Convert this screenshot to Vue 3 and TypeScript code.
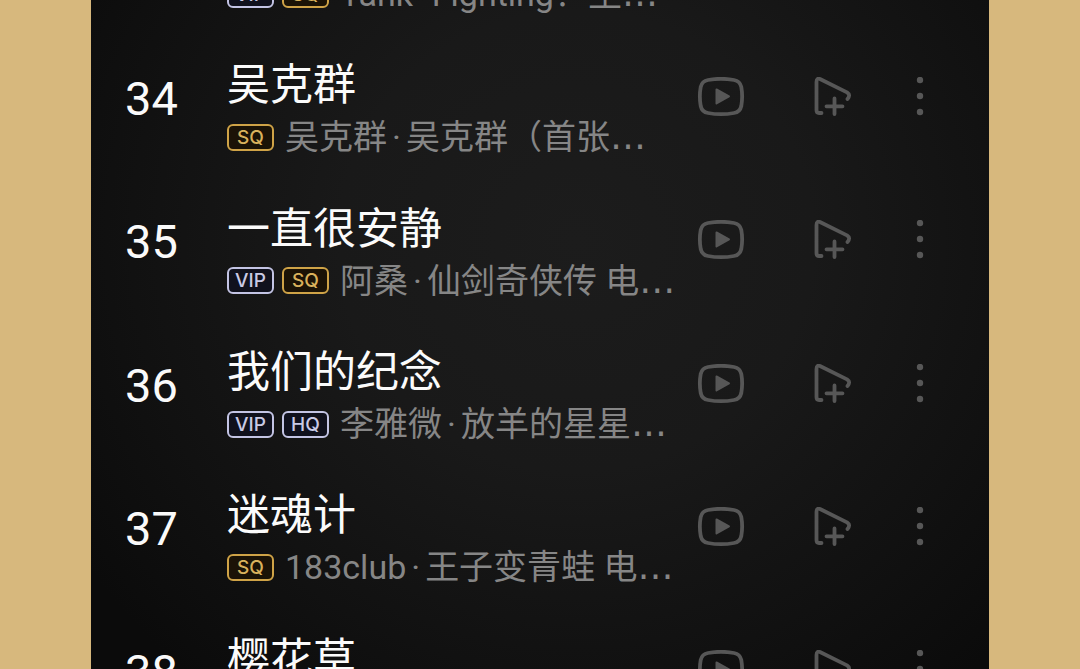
<script setup lang="ts">
interface Song {
  rank: number
  title: string
  badges: string[]
  artist: string
  album: string
}

const songs: Song[] = [
  { rank: 33, title: '三国恋', badges: ['VIP', 'SQ'], artist: 'Tank', album: 'Fighting！生' },
  { rank: 34, title: '吴克群', badges: ['SQ'], artist: '吴克群', album: '吴克群（首张' },
  { rank: 35, title: '一直很安静', badges: ['VIP', 'SQ'], artist: '阿桑', album: '仙剑奇侠传 电' },
  { rank: 36, title: '我们的纪念', badges: ['VIP', 'HQ'], artist: '李雅微', album: '放羊的星星' },
  { rank: 37, title: '迷魂计', badges: ['SQ'], artist: '183club', album: '王子变青蛙 电' },
  { rank: 38, title: '樱花草', badges: ['VIP', 'SQ'], artist: 'Sweety', album: '花言乔语' },
]
</script>

<template>
  <main class="page">
    <section class="panel">
      <ol class="songs">
        <li v-for="song in songs" :key="song.rank" class="song">
          <span class="rank">{{ song.rank }}</span>
          <div class="info">
            <h2 class="title">{{ song.title }}</h2>
            <div class="meta">
              <span
                v-for="badge in song.badges"
                :key="badge"
                class="badge"
                :class="{ gold: badge === 'SQ' }"
              >{{ badge }}</span>
              <p class="credit">{{ song.artist }}<span class="dot">·</span>{{ song.album }}<span class="more-text">…</span></p>
            </div>
          </div>
          <div class="actions">
            <button type="button" class="video" aria-label="播放视频">
              <svg width="48" height="40" viewBox="0 0 48 40" aria-hidden="true">
                <path
                  d="M11 3Q24 0.600 37 3Q43 4 44.300 10Q46 19.500 44.300 29Q43 35 37 36Q24 38.400 11 36Q5 35 3.700 29Q2 19.500 3.700 10Q5 4 11 3Z"
                  class="line"
                />
                <path d="M19.500 12.500L32 19.300L19.500 26.500Z" class="solid" />
              </svg>
            </button>
            <button type="button" class="add" aria-label="添加到播放列表">
              <svg width="40" height="40" viewBox="0 0 40 40" aria-hidden="true">
                <path
                  d="M9.500 36H7Q4.500 36 4.500 33V5Q4.500 0.400 8.500 2.200L35 15.400Q39 18 35.500 22"
                  class="line"
                />
                <path d="M14.500 29.300H30.500M22.500 21.500V37" class="line" />
              </svg>
            </button>
            <button type="button" class="menu" aria-label="更多">
              <svg width="24" height="40" viewBox="0 0 24 40" aria-hidden="true">
                <circle cx="12" cy="3" r="3.200" class="solid-dot" />
                <circle cx="12" cy="19" r="3.200" class="solid-dot" />
                <circle cx="12" cy="35" r="3.200" class="solid-dot" />
              </svg>
            </button>
          </div>
        </li>
      </ol>
    </section>
  </main>
</template>

<style>
body {
  margin: 0;
  background: #d7b87d;
}
</style>

<style scoped>
.page {
  box-sizing: border-box;
  height: 100vh;
  padding: 0 91px;
  overflow: hidden;
  background: #d7b87d;
  font-family: Roboto, "Noto Sans CJK SC", sans-serif;
}

.panel {
  height: 100%;
  overflow: hidden;
  background: radial-gradient(ellipse 66% 86% at 54% 36%, #1c1c1c 0%, #191919 40%, #111111 75%, #0b0b0b 100%);
}

/* The list is scrolled part of the way through its first row. */
.songs {
  display: grid;
  grid-auto-rows: 1fr;
  height: 860px;
  margin: -118px 0 0;
  padding: 0;
  list-style: none;
}

.song {
  display: flex;
  align-items: center;
  box-sizing: border-box;
  padding: 0 57px 0 34px;
}

.rank {
  width: 102px;
  flex: none;
  padding-top: 4px;
  color: #fafafa;
  font-size: 47px;
  line-height: 56px;
}

.info {
  flex: 1;
  min-width: 0;
  padding-top: 29px;
}

.title {
  margin: 0;
  color: #fbfbfb;
  font-size: 43px;
  font-weight: 400;
  line-height: 52px;
  white-space: nowrap;
}

.meta {
  display: flex;
  align-items: center;
  gap: 8px;
  height: 52px;
}

.badge {
  box-sizing: border-box;
  width: 47px;
  height: 27px;
  flex: none;
  border: 2px solid #c3c4e4;
  border-radius: 6px;
  background: #10111d;
  color: #c9cae6;
  font-family: Inter, sans-serif;
  font-size: 19px;
  font-weight: 500;
  line-height: 23px;
  text-align: center;
}

.badge.gold {
  border-color: #cfa347;
  background: #1b1306;
  color: #d9b25c;
}

.credit {
  margin: 0 0 0 3px;
  color: #868686;
  font-size: 34px;
  line-height: 52px;
  white-space: nowrap;
}

.dot {
  padding: 0 5px;
}

.more-text {
  font-family: "DejaVu Sans", sans-serif;
  font-size: 36px;
  line-height: 1;
}

.actions {
  display: flex;
  align-items: center;
  flex: none;
}

.actions button {
  display: block;
  padding: 0;
  border: 0;
  background: none;
  cursor: pointer;
}

.actions svg {
  display: block;
}

.add {
  margin: 0 56px 0 67px;
}

.line {
  fill: none;
  stroke: #575757;
  stroke-width: 3.8;
  stroke-linecap: round;
  stroke-linejoin: round;
}

.solid {
  fill: #575757;
  stroke: #575757;
  stroke-width: 2;
  stroke-linejoin: round;
}

.solid-dot {
  fill: #575757;
}
</style>
